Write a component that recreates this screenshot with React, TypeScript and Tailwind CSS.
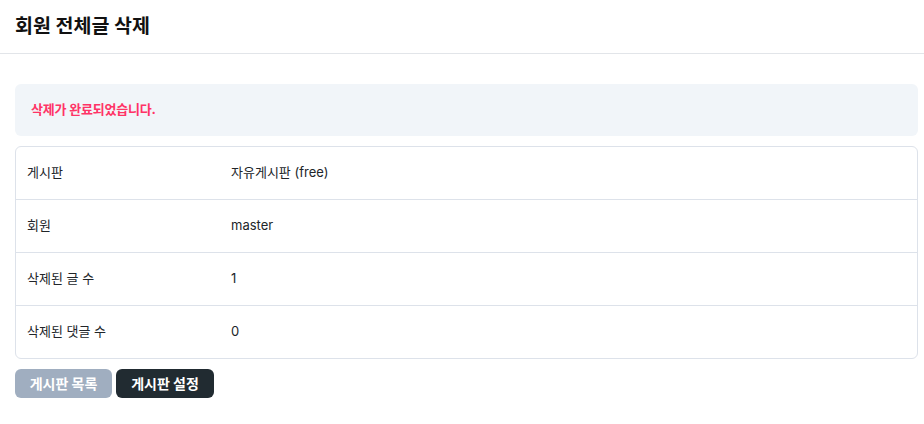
const rows = [
	{ label: "게시판", value: "자유게시판 (free)" },
	{ label: "회원", value: "master" },
	{ label: "삭제된 글 수", value: "1" },
	{ label: "삭제된 댓글 수", value: "0" },
];

export default function App() {
	return (
		<div
			className="min-h-screen bg-white text-[#212529]"
			style={{ fontFamily: 'Inter, "Noto Sans CJK KR", sans-serif' }}
		>
			<header className="flex h-[54px] items-center border-b border-[#e2e5e9] px-[15px]">
				<h1 className="text-[19.5px] font-bold text-[#111]">
					회원 전체글 삭제
				</h1>
			</header>

			<main className="pl-[15px] pr-[6px] pt-[30px]">
				<div className="flex h-[52px] items-center rounded-md bg-[#f1f5f9] px-4">
					<p className="text-[13px] font-bold tracking-[-0.2px] text-[#ff3366]">
						삭제가 완료되었습니다.
					</p>
				</div>

				<div className="mt-[10px] rounded-md border border-[#dde2ea]">
					{rows.map((row, i) => (
						<div
							key={row.label}
							className={`flex items-center text-[13px] ${
								i < rows.length - 1
									? "h-[53px] border-b border-[#dde2ea]"
									: "h-[52px]"
							}`}
						>
							<div className="w-[215px] pl-[11px]">{row.label}</div>
							<div>{row.value}</div>
						</div>
					))}
				</div>

				<div className="mt-[10px] flex gap-1">
					<button
						type="button"
						className="h-[29px] w-[97px] rounded-md bg-[#a0aec0] text-[14px] font-bold text-white"
					>
						게시판 목록
					</button>
					<button
						type="button"
						className="h-[29px] w-[98px] rounded-md bg-[#212b31] text-[14px] font-bold text-white"
					>
						게시판 설정
					</button>
				</div>
			</main>
		</div>
	);
}
